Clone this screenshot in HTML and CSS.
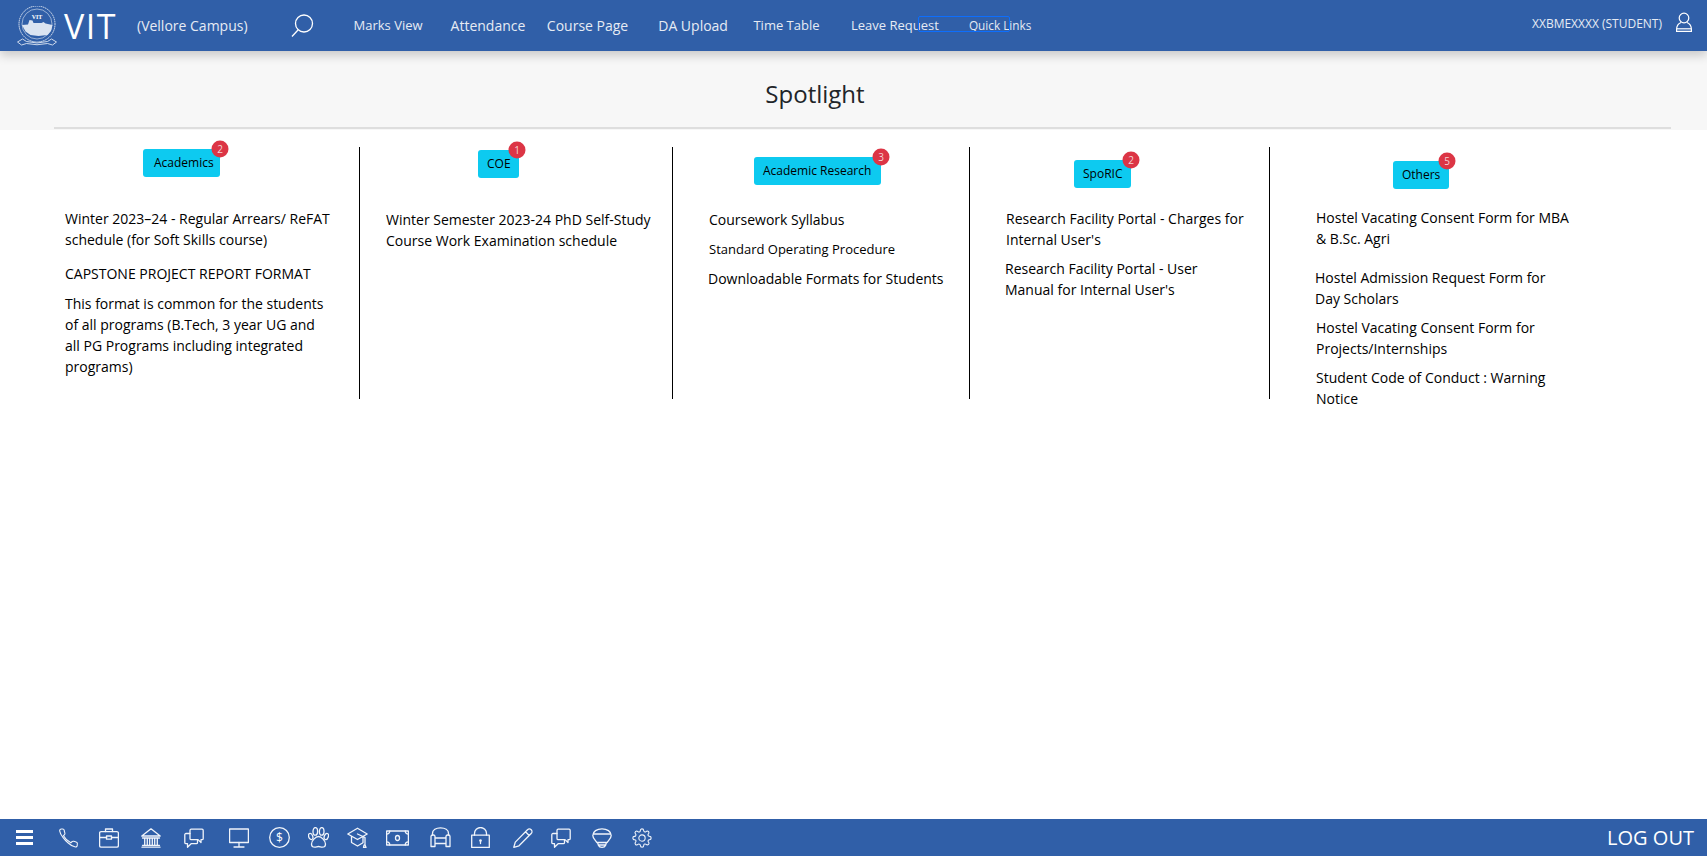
FILE: index.html
```html
<!DOCTYPE html>
<html lang="en">
<head>
<meta charset="utf-8">
<title>VIT Spotlight</title>
<link rel="stylesheet" href="styles.css">
</head>
<body>
<svg class="defs" width="0" height="0" aria-hidden="true">
  <symbol id="chat" viewBox="0 0 20 20">
    <path d="M6 5.500H2a1.200 1.200 0 0 0-1.200 1.200v7.800A1.200 1.200 0 0 0 2 15.700h1.500v3.600l3.600-3.600h5.200a1.200 1.200 0 0 0 1.200-1.200v-2.800"/>
    <path d="M7.200 1.200h10.800a1.200 1.200 0 0 1 1.200 1.200v8a1.200 1.200 0 0 1-1.200 1.200h-1v2.900l-3-2.900H7.200A1.200 1.200 0 0 1 6 10.400V2.400a1.200 1.200 0 0 1 1.200-1.200z"/>
  </symbol>
</svg>
<header class="topbar">
  <svg class="logo" viewBox="0 0 40 40" aria-hidden="true">
    <circle cx="20" cy="18" r="18" class="logo-ring"/>
    <circle cx="20" cy="18" r="15" class="logo-ring thin"/>
    <text x="20" y="12.500" class="logo-text">VIT</text>
    <path class="logo-fill" d="M5 19l6-.5 1.500-4.500 3 .5 1 2.500h8l2-1 2 1.500 7 1.500-1.500 6-3.500 4-9 1-8-1-5-3.500z"/>
    <path class="logo-ribbon" d="M.5 36l5-3 4 2.500q10.500 3 21 0l4-2.500 5 3-4 3-5-1.500q-10.500 2.500-21 0l-5 1.500z"/>
  </svg>
  <span class="brand">VIT</span>
  <span class="campus">(Vellore Campus)</span>
  <svg class="search" viewBox="0 0 23 23" aria-hidden="true">
    <circle cx="13" cy="9.500" r="8.500"/>
    <path d="M7 16l-6 6.500"/>
  </svg>
  <nav class="nav">
    <a class="nav-marks">Marks View</a>
    <a class="nav-att">Attendance</a>
    <a class="nav-course">Course Page</a>
    <a class="nav-da">DA Upload</a>
    <a class="nav-time">Time Table</a>
    <a class="nav-leave">Leave Request</a>
    <a class="nav-quick">Quick Links</a>
    <span class="focus-box"></span>
  </nav>
  <div class="user">
    <span>XXBMEXXXX (STUDENT)</span>
    <svg viewBox="0 0 16 20" aria-hidden="true">
      <circle cx="8" cy="6" r="4.800"/>
      <path d="M5 10.500C2.500 11.500.6 14 .6 17.500v1.900h14.800v-1.900c0-3.500-1.900-6-4.400-7"/>
      <path d="M.6 16.800h14.800"/>
    </svg>
  </div>
</header>

<section class="spot-head">
  <h1>Spotlight</h1>
  <div class="rule"></div>
</section>

<main class="cols">
  <div class="col col-1">
    <a class="tag tag-1">Academics<b class="count">2</b></a>
    <p class="item">Winter 2023–24 - Regular Arrears/ ReFAT schedule (for Soft Skills course)</p>
    <p class="item gap-13">CAPSTONE PROJECT REPORT FORMAT</p>
    <p class="item gap-9">This format is common for the students of all programs (B.Tech, 3 year UG and all PG Programs including integrated programs)</p>
  </div>
  <div class="col col-2">
    <a class="tag tag-2">COE<b class="count">1</b></a>
    <p class="item">Winter Semester 2023-24 PhD Self-Study Course Work Examination schedule</p>
  </div>
  <div class="col col-3">
    <a class="tag tag-3">Academic Research<b class="count">3</b></a>
    <p class="item">Coursework Syllabus</p>
    <p class="item gap-9 small">Standard Operating Procedure</p>
    <p class="item gap-8 shift">Downloadable Formats for Students</p>
  </div>
  <div class="col col-4">
    <a class="tag tag-4">SpoRIC<b class="count">2</b></a>
    <p class="item">Research Facility Portal - Charges for Internal User's</p>
    <p class="item gap-8 shift narrow">Research Facility Portal - User Manual for Internal User's</p>
  </div>
  <div class="col col-5">
    <a class="tag tag-5">Others<b class="count">5</b></a>
    <p class="item">Hostel Vacating Consent Form for MBA &amp; B.Sc. Agri</p>
    <p class="item gap-18 shift tight">Hostel Admission Request Form for Day Scholars</p>
    <p class="item gap-8 tight">Hostel Vacating Consent Form for Projects/Internships</p>
    <p class="item gap-8 tight">Student Code of Conduct : Warning Notice</p>
  </div>
</main>

<footer class="bottombar">
  <div class="icons">
    <span class="burger"><i></i><i></i><i></i></span>
    <svg class="ic ic-phone" viewBox="0 0 24 24"><path d="M22.500 19.500v1.200a2 2 0 0 1-2.200 2c-3.200-.5-6.200-2.300-9-5a40 40 0 0 1-6-6.500C3.300 8.800 1.800 6 1.400 3.500A2 2 0 0 1 3.400 1.200h1.500a2 2 0 0 1 2 1.700c.1 1 .4 2 .7 2.900a2 2 0 0 1-.4 2.100L6 9.200a22 22 0 0 0 8.800 8.600l1.300-1.300a2 2 0 0 1 2.100-.5c.9.400 1.900.6 2.900.8a2 2 0 0 1 1.400 2.700z"/></svg>
    <svg class="ic ic-case" viewBox="0 0 20 20"><rect x=".6" y="3.600" width="18.800" height="15.500" rx="1.500"/><path d="M6.500 3.500V1h7v2.500M.6 9.500h7M12.500 9.500h6.900"/><rect x="7.500" y="8" width="5" height="3.200"/></svg>
    <svg class="ic ic-bank" viewBox="0 0 20 20"><path d="M10 .8L.8 8h18.400zM1.500 10h17M1 19.200h18M1.500 17.300h17M3.700 10v7.300M6.300 10v7.300M8.700 10v7.300M11.300 10v7.300M13.700 10v7.300M16.300 10v7.300"/></svg>
    <svg class="ic ic-chat"><use href="#chat"/></svg>
    <svg class="ic ic-mon" viewBox="0 0 20 20"><rect x=".6" y="1" width="18.800" height="13.500"/><path d="M10 14.500v4M5 19h10"/></svg>
    <svg class="ic ic-dollar" viewBox="0 0 21 21"><circle cx="10.500" cy="10.500" r="9.800"/><text x="10.500" y="15" class="dollar">$</text></svg>
    <svg class="ic ic-paw" viewBox="0 0 21 21"><path d="M10.500 9.500c-3 0-7 4.500-7 7.500 0 2 1.500 3.200 3.300 3.200 1.500 0 2.200-.7 3.700-.7s2.200.7 3.700.7c1.800 0 3.300-1.200 3.300-3.200 0-3-4-7.500-7-7.500z"/><ellipse cx="7.300" cy="4.400" rx="2.300" ry="3.800"/><ellipse cx="13.700" cy="4.400" rx="2.300" ry="3.800"/><ellipse cx="2.700" cy="9.500" rx="2" ry="3.200" transform="rotate(-20 2.700 9.500)"/><ellipse cx="18.300" cy="9.500" rx="2" ry="3.200" transform="rotate(20 18.300 9.500)"/></svg>
    <svg class="ic ic-grad" viewBox="0 0 21 21"><path d="M10.500 1.200L.8 7l9.700 5.500L20.200 7zM4.500 9.500v6l6 3.500 5.500-3.200v-6.300M10.500 7l7.500 3.500v7.500M17 18.200l1-.5 1 2.800h-2.500z"/></svg>
    <svg class="ic ic-money" viewBox="0 0 23 16"><path d="M.6 1h21.800v14H.6z"/><path d="M.6 4.200A3.200 3.200 0 0 0 3.800 1M19.200 1a3.200 3.200 0 0 0 3.200 3.200M22.400 11.800a3.200 3.200 0 0 0-3.200 3.200M3.800 15a3.200 3.200 0 0 0-3.200-3.200"/><ellipse cx="11.500" cy="8" rx="2" ry="2.500"/></svg>
    <svg class="ic ic-sofa" viewBox="0 0 21 21"><path d="M2.500 8V6.500C2.500 2.800 6 .8 10.500.8s8 2 8 5.700V8"/><path d="M1 9.500A1.500 1.500 0 0 1 2.500 8h1A1.500 1.500 0 0 1 5 9.500V19.500H1zM16 9.500A1.500 1.500 0 0 1 17.500 8h1A1.500 1.500 0 0 1 20 9.500V19.500h-4zM5 11h11M5 16.500h11"/></svg>
    <svg class="ic ic-lock" viewBox="0 0 19 21"><rect x=".7" y="8.200" width="17.600" height="12.300"/><path d="M3.500 8.200V6.500a6 6 0 0 1 12 0v1.700"/><circle class="solid" cx="9.500" cy="13.500" r="1.300"/><path d="M9.500 14v2.500"/></svg>
    <svg class="ic ic-pencil" viewBox="0 0 20 20"><path d="M14.500 1.800a2.600 2.600 0 0 1 3.700 3.700L6 17.800l-5.200 1.500 1.500-5.200zM12.500 3.800l3.700 3.700"/></svg>
    <svg class="ic ic-chat2"><use href="#chat"/></svg>
    <svg class="ic ic-bulb" viewBox="0 0 20 20"><path d="M.8 7.500C.8 3.500 5 .8 10 .8s9.200 2.700 9.200 6.700c0 3-3 5-4 7H4.800c-1-2-4-4-4-7zM1.200 6h17.600M5.500 14.500l1 3c.5 1.200 1.800 1.800 3.500 1.800s3-.6 3.500-1.800l1-3M6.300 17h7.400"/></svg>
    <svg class="ic ic-gear" viewBox="0 0 24 24"><circle cx="12" cy="12" r="3.800"/><path d="M19.400 15a1.650 1.650 0 0 0 .33 1.820l.06.06a2 2 0 1 1-2.830 2.830l-.06-.06a1.650 1.650 0 0 0-1.820-.33 1.650 1.650 0 0 0-1 1.510V21a2 2 0 0 1-4 0v-.09A1.650 1.650 0 0 0 9 19.400a1.650 1.650 0 0 0-1.820.33l-.06.06a2 2 0 1 1-2.830-2.830l.06-.06a1.650 1.650 0 0 0 .33-1.820 1.650 1.650 0 0 0-1.510-1H3a2 2 0 0 1 0-4h.09A1.650 1.650 0 0 0 4.600 9a1.650 1.650 0 0 0-.33-1.820l-.06-.06a2 2 0 1 1 2.830-2.830l.06.06a1.650 1.650 0 0 0 1.820.33H9a1.650 1.650 0 0 0 1-1.510V3a2 2 0 0 1 4 0v.09a1.650 1.650 0 0 0 1 1.510 1.650 1.650 0 0 0 1.820-.33l.06-.06a2 2 0 1 1 2.830 2.830l-.06.06a1.650 1.650 0 0 0-.33 1.820V9a1.650 1.650 0 0 0 1.510 1H21a2 2 0 0 1 0 4h-.09a1.650 1.650 0 0 0-1.510 1z"/></svg>
  </div>
  <span class="logout">LOG OUT</span>
</footer>
</body>
</html>
```

FILE: styles.css
```css
* { box-sizing: border-box; }
html, body { height: 100%; }
body {
  margin: 0;
  height: 856px;
  overflow: hidden;
  display: flex;
  flex-direction: column;
  background: #fff;
  color: #212529;
  font-family: "Open Sans", "Noto Sans", sans-serif;
  font-size: 14px;
  line-height: 21px;
}
.defs { position: absolute; }

/* top bar */
.topbar {
  position: relative;
  z-index: 2;
  flex: none;
  height: 51px;
  display: flex;
  align-items: center;
  padding-left: 17px;
  background: #305fa8;
  color: #fff;
  box-shadow: 0 4px 10px rgba(0, 0, 0, .2);
}
.logo { width: 40px; height: 40px; flex: none; }
.logo-ring { fill: none; stroke: #dfe7f3; stroke-width: 1; stroke-dasharray: 1.5 .6; }
.logo-ring.thin { stroke-width: .6; stroke-dasharray: none; }
.logo-text { font: bold 6px "Liberation Serif", serif; fill: #fff; text-anchor: middle; }
.logo-fill { fill: #dbe4f1; }
.logo-ribbon { fill: none; stroke: #dfe7f3; stroke-width: .9; }
.brand {
  margin-left: 7px;
  width: 73px;
  font-size: 34px;
  font-weight: 400;
  letter-spacing: 1.5px;
  line-height: 40px;
}
.campus { width: 154px; font-size: 14px; color: #e6ebf4; }
.search { width: 23px; height: 23px; flex: none; fill: none; stroke: #fff; stroke-width: 1.3; }
.nav {
  position: relative;
  display: flex;
  align-items: center;
  margin-left: 39.5px;
  font-size: 14px;
  color: #e6ebf4;
  white-space: nowrap;
}
.nav-marks { font-size: 13px; }
.nav-att { margin-left: 28px; }
.nav-course { margin-left: 21.5px; }
.nav-da { margin-left: 30px; }
.nav-time { margin-left: 25.5px; font-size: 13px; }
.nav-leave { margin-left: 31.5px; font-size: 13px; }
.nav-quick { margin-left: 30px; font-size: 11.8px; }
.focus-box {
  position: absolute;
  left: 564.5px;
  top: 1px;
  width: 92px;
  height: 16px;
  border: 1px solid #0d6efd;
  border-radius: 2px;
}
.user {
  margin-left: auto;
  margin-right: 15px;
  display: flex;
  align-items: center;
  gap: 14px;
  font-size: 12px;
  color: #e6ebf4;
}
.user svg { width: 16px; height: 20px; margin-top: -7px; fill: none; stroke: #fff; stroke-width: 1.2; }
.user span { margin-top: -5px; }

/* heading */
.spot-head {
  flex: none;
  height: 79px;
  padding: 0 36px 0 54px;
  background: #f7f7f7;
  display: flex;
  flex-direction: column;
}
.spot-head h1 {
  margin: 26px 0 0;
  height: 34px;
  padding-right: 95px;
  font-size: 24px;
  font-weight: 400;
  line-height: 34px;
  text-align: center;
}
.rule { margin-top: 16px; height: 2px; background: #dedede; }

/* columns */
.cols {
  flex: none;
  display: flex;
  margin: 17px 0 0 54px;
}
.col {
  height: 252px;
  border-right: 1.5px solid #000;
  color: #000;
}
.col-1 { width: 306px; padding-left: 11px; padding-right: 27px; }
.col-2 { width: 313px; padding-left: 26px; padding-right: 20px; }
.col-3 { width: 297px; padding-left: 36px; }
.col-4 { width: 300px; padding-left: 36px; padding-right: 20px; }
.col-5 { width: 400px; padding-left: 46px; border-right: 0; }

.tag {
  position: relative;
  display: block;
  width: max-content;
  height: 28px;
  border-radius: 3px;
  background: #0dcaf0;
  color: #000;
  font-size: 12px;
  line-height: 28px;
  padding: 0 9px;
  white-space: nowrap;
}
.tag-1 { margin: 2px 0 31px 78px; padding-left: 11px; width: 77px; }
.tag-2 { margin: 3px 0 31px 92px; width: 41px; }
.tag-3 { margin: 10px 0 24px 45px; width: 127px; }
.tag-4 { margin: 13px 0 20px 68px; width: 57px; }
.tag-5 { margin: 14px 0 18px 77px; width: 56px; }
.count {
  position: absolute;
  top: 0;
  left: 100%;
  transform: translate(-50%, -50%);
  width: 17px;
  height: 17px;
  border-radius: 50%;
  background: #dc3545;
  color: #f3d3d6;
  font-size: 10px;
  font-weight: 400;
  line-height: 17px;
  text-align: center;
}
.tag-2 .count, .tag-5 .count { left: calc(100% - 2px); }

.item { margin: 0; }
.gap-8 { margin-top: 8px; }
.gap-9 { margin-top: 9px; }
.gap-13 { margin-top: 13px; }
.gap-18 { margin-top: 18px; }
.small { font-size: 13px; }
.shift { margin-left: -1px; }
.narrow { max-width: 260px; }
.col-5 .item { max-width: 262px; }
.col-5 .item.tight { max-width: 240px; }

/* bottom bar */
.bottombar {
  margin-top: auto;
  flex: none;
  height: 37px;
  display: flex;
  align-items: center;
  padding: 0 13px 0 16px;
  background: #305fa8;
  color: #fff;
}
.icons { display: flex; align-items: center; }
.burger { width: 17px; display: flex; flex-direction: column; gap: 3px; }
.burger i { display: block; height: 3px; background: #fff; }
.ic {
  flex: none;
  width: 20px;
  height: 20px;
  fill: none;
  stroke: #f0f4fa;
  stroke-width: 1.3;
  stroke-linejoin: round;
  stroke-linecap: round;
}
.ic-phone { margin-left: 25px; width: 21px; }
.ic-case { margin-left: 20px; }
.ic-bank { margin-left: 22px; }
.ic-chat { margin-left: 23px; }
.ic-mon { margin-left: 25px; }
.ic-dollar { margin-left: 20px; width: 21px; height: 21px; }
.ic-paw { margin-left: 18px; width: 21px; height: 21px; }
.ic-grad { margin-left: 18px; width: 21px; height: 21px; }
.ic-money { margin-left: 18px; width: 23px; height: 16px; }
.ic-sofa { margin-left: 21px; width: 21px; height: 21px; }
.ic-lock { margin-left: 20px; width: 19px; height: 21px; }
.ic-pencil { margin-left: 23px; }
.ic-chat2 { margin-left: 18px; }
.ic-bulb { margin-left: 21px; }
.ic-gear { margin-left: 20px; }
.dollar { font: 12px "Open Sans", sans-serif; fill: #fff; stroke: none; text-anchor: middle; }
.solid { fill: #f0f4fa; stroke: none; }
.logout { margin-left: auto; font-size: 20px; font-weight: 400; color: #fff; }
```
